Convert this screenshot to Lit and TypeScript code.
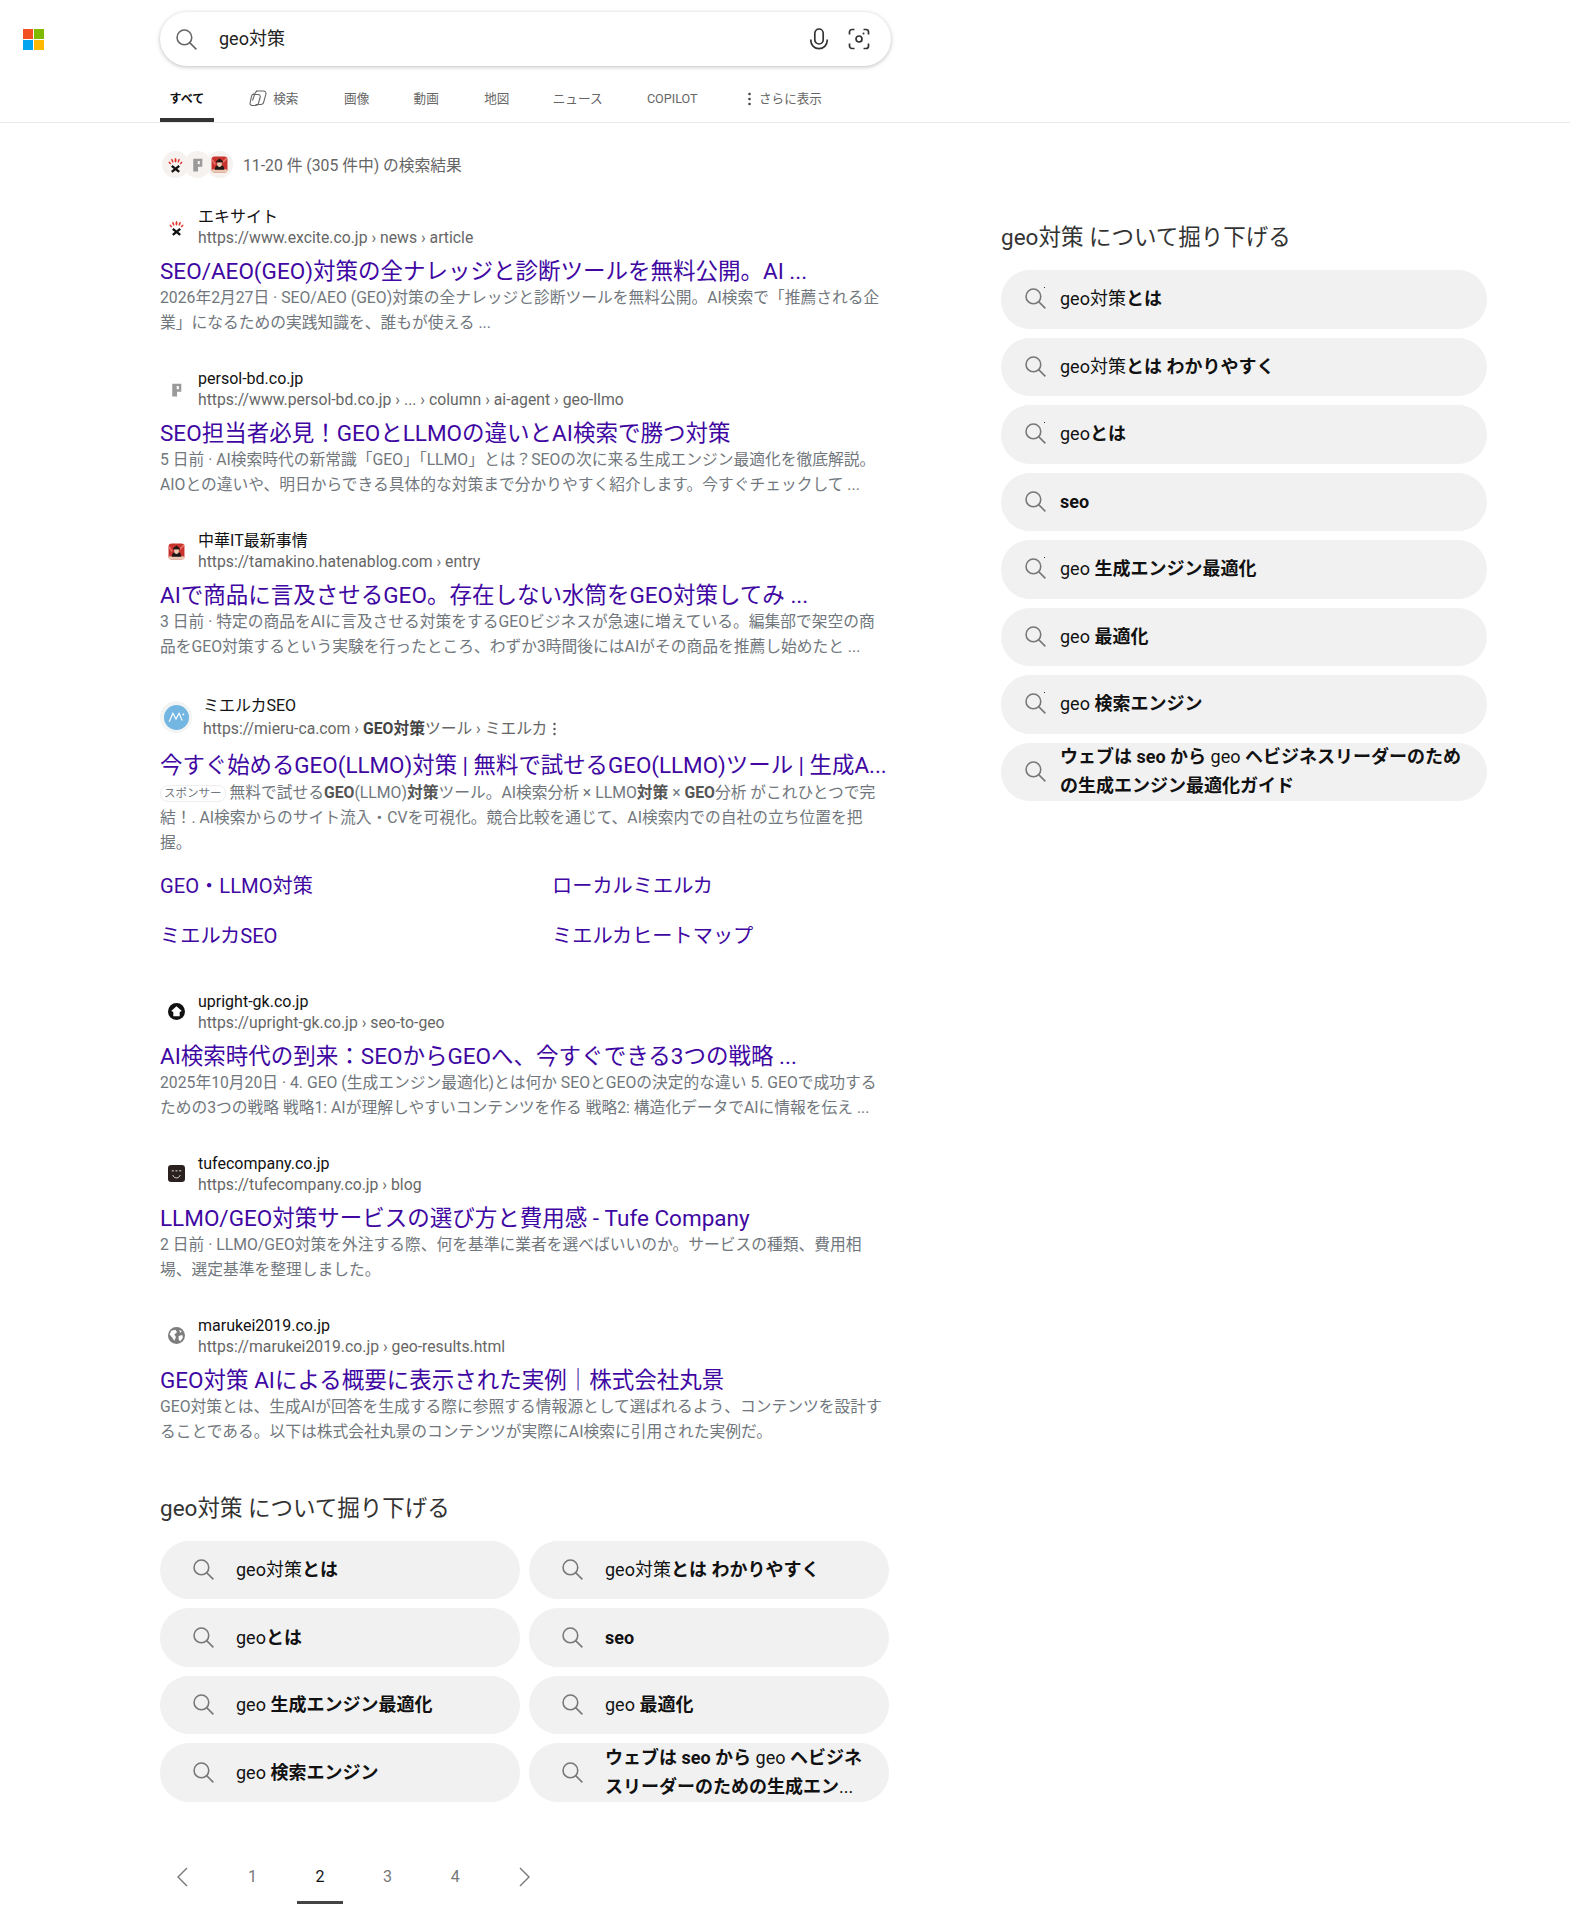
import { LitElement, html, css, svg } from "lit";
import { customElement } from "lit/decorators.js";

const searchIcon = (cls: string) => html`<svg class=${cls} viewBox="0 0 20 20" fill="none" stroke="currentColor" stroke-width="1.5"><circle cx="8" cy="8" r="7"/><path d="M13 13 19.400 19.400"/></svg>`;

const fav: Record<string, unknown> = {
  excite: svg`<g fill="#e0352c"><ellipse cx="8" cy="4" rx=".9" ry="2.200"/><ellipse cx="5" cy="4.500" rx=".8" ry="2" transform="rotate(-20 5 4.500)"/><ellipse cx="11" cy="4.500" rx=".8" ry="2" transform="rotate(20 11 4.500)"/><ellipse cx="2.700" cy="6.500" rx=".7" ry="1.600" transform="rotate(-45 2.700 6.500)"/><ellipse cx="13.300" cy="6.500" rx=".7" ry="1.600" transform="rotate(45 13.300 6.500)"/></g><path d="M4.500 9.300 11.500 15M11.500 9.300 4.500 15" stroke="#111" stroke-width="2.200"/>`,
  persol: svg`<path d="M4 2.500h8.500v7.500H8.500v4.500H4zM8.200 4.800v3h2V4.800z" fill="#9a9a9a" fill-rule="evenodd"/>`,
  hatena: svg`<rect x="0.500" y="0.500" width="15" height="15" rx="3" fill="#c9332e"/><rect x="0.500" y="12.500" width="15" height="3" rx="1.500" fill="#e8c9b4"/><path d="M1 3.500 4 8M15 2 11 6" stroke="#e9746a" stroke-width="1.400"/><path d="M3.500 13c.4-3.500 1.600-4.500 4.700-4.500s4 1.200 4.300 4.500z" fill="#201614"/><path d="M4.800 5 8 2.300 11.200 5v1.200H4.800z" fill="#201614"/><path d="M5.800 6h4.400v2c0 1.300-1 2.300-2.200 2.300S5.800 9.300 5.800 8z" fill="#e8cbb0"/>`,
  upright: svg`<circle cx="8" cy="8" r="8" fill="#111"/><path d="M8 3 13 7.500 11 8.500V12.500H5V8.500L3 7.500z" fill="#fff"/>`,
  tufe: svg`<rect width="16" height="16" rx="3" fill="#2a211f"/><path d="M4.500 9.500c1 3.500 6 3.500 7 0" stroke="#e8e4e0" fill="none" stroke-width=".9"/><path d="M3.500 5.500h2M7 5.500h2M10.500 5.500h2" stroke="#e8e4e0" stroke-width=".9"/>`,
  globe: svg`<circle cx="8" cy="8" r="8" fill="#7d7d7d"/><path d="M3 3.500 7 2.500 8.500 5 6 7 7.500 9.500 6 13 3.500 9.500 1.500 7zM10 8.500 13.500 7.500 14 10 11.500 13.500 10 12z M10.500 2.500l2.500 1.500-1.500 1.500z" fill="#fff"/>`,
};

const results = [
  { f: "excite", name: "エキサイト", url: html`https://www.excite.co.jp › news › article`,
    title: "SEO/AEO(GEO)対策の全ナレッジと診断ツールを無料公開。AI ...",
    lines: ["2026年2月27日 · SEO/AEO (GEO)対策の全ナレッジと診断ツールを無料公開。AI検索で「推薦される企", "業」になるための実践知識を、誰もが使える ..."] },
  { f: "persol", name: "persol-bd.co.jp", url: html`https://www.persol-bd.co.jp › ... › column › ai-agent › geo-llmo`,
    title: "SEO担当者必見！GEOとLLMOの違いとAI検索で勝つ対策",
    lines: ["5 日前 · AI検索時代の新常識「GEO」「LLMO」とは？SEOの次に来る生成エンジン最適化を徹底解説。", "AIOとの違いや、明日からできる具体的な対策まで分かりやすく紹介します。今すぐチェックして ..."] },
  { f: "hatena", name: "中華IT最新事情", url: html`https://tamakino.hatenablog.com › entry`,
    title: "AIで商品に言及させるGEO。存在しない水筒をGEO対策してみ ...",
    lines: ["3 日前 · 特定の商品をAIに言及させる対策をするGEOビジネスが急速に増えている。編集部で架空の商", "品をGEO対策するという実験を行ったところ、わずか3時間後にはAIがその商品を推薦し始めたと ..."] },
];
const results2 = [
  { f: "upright", name: "upright-gk.co.jp", url: html`https://upright-gk.co.jp › seo-to-geo`,
    title: "AI検索時代の到来：SEOからGEOへ、今すぐできる3つの戦略 ...",
    lines: ["2025年10月20日 · 4. GEO (生成エンジン最適化)とは何か SEOとGEOの決定的な違い 5. GEOで成功する", "ための3つの戦略 戦略1: AIが理解しやすいコンテンツを作る 戦略2: 構造化データでAIに情報を伝え ..."] },
  { f: "tufe", name: "tufecompany.co.jp", url: html`https://tufecompany.co.jp › blog`,
    title: "LLMO/GEO対策サービスの選び方と費用感 - Tufe Company",
    lines: ["2 日前 · LLMO/GEO対策を外注する際、何を基準に業者を選べばいいのか。サービスの種類、費用相", "場、選定基準を整理しました。"] },
  { f: "globe", name: "marukei2019.co.jp", url: html`https://marukei2019.co.jp › geo-results.html`,
    title: "GEO対策 AIによる概要に表示された実例｜株式会社丸景",
    lines: ["GEO対策とは、生成AIが回答を生成する際に参照する情報源として選ばれるよう、コンテンツを設計す", "ることである。以下は株式会社丸景のコンテンツが実際にAI検索に引用された実例だ。"] },
];

const pills = [
  html`geo対策<b>とは</b>`,
  html`geo対策<b>とは わかりやすく</b>`,
  html`geo<b>とは</b>`,
  html`<b>seo</b>`,
  html`geo <b>生成エンジン最適化</b>`,
  html`geo <b>最適化</b>`,
  html`geo <b>検索エンジン</b>`,
];

@customElement("app-root")
export class AppRoot extends LitElement {
  static styles = css`
    :host { display: block; width: 1570px; height: 1908px; overflow: hidden; background: #fff; color: #111;
      font-family: Roboto, "Noto Sans CJK JP", sans-serif; font-size: 15.750px; }
    b { font-weight: 700; }
    .header { height: 123px; box-sizing: border-box; border-bottom: 1px solid #e8e8e8; padding-left: 23px; }
    .top { display: flex; align-items: flex-start; }
    .logo { width: 21px; height: 20px; margin-top: 29px; display: grid; grid-template-columns: 10px 10px; grid-template-rows: 10px 10px; gap: 1px; flex: none; }
    .logo i:nth-child(1) { background: #f25022; }
    .logo i:nth-child(2) { background: #7fba00; }
    .logo i:nth-child(3) { background: #00a4ef; }
    .logo i:nth-child(4) { background: #ffb900; }
    .box { margin-left: 116px; margin-top: 12px; width: 731px; height: 54px; box-sizing: border-box; border-radius: 27px; background: #fff;
      box-shadow: 0 1px 4px rgba(0,0,0,.26); display: flex; align-items: center; padding: 0 21px 0 16px; }
    .box .si { width: 21px; height: 21px; color: #666; flex: none; }
    .q { margin-left: 22px; font-size: 18px; color: #222; flex: 1; padding-bottom: 5px; }
    .box svg.mic { width: 20px; height: 22px; color: #333; }
    .box svg.cam { width: 22px; height: 22px; color: #333; margin-left: 19px; }
    .tabs { display: flex; gap: 24.400px; margin-left: 137px; margin-top: 18px; height: 38px; box-sizing: border-box; font-size: 12.600px; color: #666; }
    .tab { padding: 7px 10px 0; height: 38px; box-sizing: border-box; white-space: nowrap; display: flex; align-items: flex-start; line-height: 16px; position: relative; }
    .tab.on { color: #111; font-weight: 700; font-size: 12px; padding: 7px 9.500px 0; border-bottom: 4px solid #333; margin-right: 1.200px; }
    .tab.ico { margin-right: 1.200px; }
    .tab.map { margin-left: 1px; }
    .tab.news { margin-left: -1px; }
    .tab.more { margin-left: 6px; }
    .tab svg { width: 18px; height: 18px; margin-right: 6px; margin-top: -2px; color: #666; }
    .tab .dots { width: 3px; height: 14px; margin: 1px 8px 0 0; color: #444; }
    .content { display: flex; align-items: flex-start; }
    .main { margin-left: 160px; width: 731px; flex: none; }
    .count { display: flex; align-items: center; margin-top: 27px; height: 28px; color: #666; }
    .stack { display: flex; margin-right: 10px; margin-left: 2px; }
    .stack span { width: 27px; height: 27px; border-radius: 50%; background: #f5f2ef; display: flex; align-items: center; justify-content: center; margin-right: -5px; flex: none; }
    .stack span:last-child { margin-right: 0; }
    .stack svg { width: 17px; height: 17px; flex: none; }
    .res { margin-bottom: 33px; }
    .res.first { margin-top: 28px; }
    .head { display: flex; align-items: center; height: 42px; }
    .fi { width: 32px; display: flex; justify-content: center; flex: none; margin-right: 6px; }
    .fi svg { width: 17px; height: 17px; }
    .name { line-height: 21px; color: #111; white-space: nowrap; font-size: 16px; }
    .url { line-height: 21px; color: #666; white-space: nowrap; }
    .url b { color: #444; }
    .title { display: block; margin-top: 8px; font-size: 22.500px; line-height: 30px; color: #4007a2; white-space: nowrap; }
    .snip { margin-top: -1px; line-height: 25px; color: #71777d; white-space: nowrap; }
    .snip b { color: #555; }
    .ad { margin-bottom: 40px; }
    .ad .fi { margin-right: 11px; }
    .ad .badge { width: 32px; height: 32px; border-radius: 50%; background: #f3f4f4; display: flex; align-items: center; justify-content: center; flex: none; }
    .ad .badge svg { width: 25px; height: 25px; }
    .ad .head { height: 50px; }
    .ad .name, .ad .url { line-height: 23px; }
    .ad .url { display: flex; align-items: center; }
    .ad .title { margin-top: 8px; white-space: nowrap; font-size: 22.400px; }
    .ad .snip { margin-top: 0; }
    .kebab { width: 3px; height: 14px; margin-left: 6px; color: #555; }
    .sp { display: inline-block; font-size: 11.500px; line-height: 15px; padding: 0 3px; border: 1px solid #eee; border-radius: 8px; margin-right: 4px; color: #71777d; vertical-align: 1px; }
    .links { display: grid; grid-template-columns: 392px 1fr; row-gap: 21px; margin-top: 16.500px; font-size: 20.200px; line-height: 29px; color: #4007a2; }
    h2 { font-size: 22.500px; font-weight: 400; color: #333; margin: 0; line-height: 30px; }
    .main h2 { margin-top: 49px; }
    .grid { display: grid; grid-template-columns: 360px 360px; gap: 9px; margin-top: 18px; }
    .pill { height: 58.500px; box-sizing: border-box; border-radius: 29px; background: #f1f1f1; display: flex; align-items: center; padding-left: 33px; font-size: 18px; line-height: 29px; color: #111; position: relative; }
    .pill .si { width: 21px; height: 21px; color: #777; flex: none; margin-right: 22px; }
    .pager { display: flex; margin-top: 48px; height: 54px; margin-left: -9px; color: #777; font-size: 16px; }
    .pg { width: 67.600px; display: flex; align-items: center; justify-content: center; height: 54px; box-sizing: border-box; }
    .pg.on { color: #111; position: relative; }
    .pg.on::after { content: ""; position: absolute; left: 11px; right: 11px; bottom: 0; height: 3px; background: #444; }
    .pg svg { width: 14px; height: 28px; color: #777; }
    .pg.prev { padding-right: 5px; }
    .pg.next { padding-left: 5px; }
    .side { margin-left: 110px; width: 486px; margin-top: 100px; flex: none; }
    .side h2 { margin-top: -1px; }
    .side .list { margin-top: 18px; display: flex; flex-direction: column; gap: 9px; }
    .side .pill { padding-left: 24px; padding-bottom: 1px; }
    .side .pill .si { margin-right: 14px; }
    .side .pill:nth-child(odd):not(:last-child)::after { content: ""; position: absolute; left: 43px; top: 17px; width: 1px; height: 1px; background: #333; }
  `;

  private res(r: any, cls = "") {
    return html`<div class="res ${cls}">
      <div class="head"><div class="fi"><svg viewBox="0 0 16 16">${fav[r.f]}</svg></div>
        <div><div class="name">${r.name}</div><div class="url">${r.url}</div></div></div>
      <a class="title">${r.title}</a>
      <div class="snip">${r.lines.map((l: string, i: number) => i ? html`<br />${l}` : l)}</div>
    </div>`;
  }

  private pill(c: unknown) {
    return html`<div class="pill">${searchIcon("si")}<div>${c}</div></div>`;
  }

  render() {
    return html`
      <div class="header">
        <div class="top">
          <div class="logo"><i></i><i></i><i></i><i></i></div>
          <div class="box">
            ${searchIcon("si")}
            <div class="q">geo対策</div>
            <svg class="mic" viewBox="0 0 20 22" fill="none" stroke="currentColor" stroke-width="1.700"><rect x="5.800" y="1" width="8.400" height="15" rx="4.200"/><path d="M1.800 11.500v1a8.200 8.200 0 0 0 16.400 0v-1" /></svg>
            <svg class="cam" viewBox="0 0 22 22" fill="none" stroke="currentColor" stroke-width="1.700"><path d="M6.500 1.500H4A2.500 2.500 0 0 0 1.500 4V6.500M15.500 1.500H18A2.500 2.500 0 0 1 20.500 4V6.500M6.500 20.500H4A2.500 2.500 0 0 1 1.500 18V15.500M15.500 20.500H18a2.500 2.500 0 0 0 2.500-2.500V15.500"/><circle cx="11" cy="11" r="3"/><circle cx="15.500" cy="5.500" r="1" fill="currentColor" stroke="none"/></svg>
          </div>
        </div>
        <div class="tabs">
          <div class="tab on">すべて</div>
          <div class="tab ico"><svg viewBox="0 0 18 18" fill="none" stroke="currentColor" stroke-width="1.100"><path d="M7 2h7.500a2.500 2.500 0 0 1 2.400 3.200l-2.200 8a3 3 0 0 1-2.900 2.300H6.500"/><path d="M8 2 6.300 3.500 3.500 11.500"/><path d="M4.500 5.500h4.700a2 2 0 0 1 2 2.500l-1.800 6.500a3 3 0 0 1-2.900 2H3a2 2 0 0 1-1.900-2.600l1.400-6.500a3 3 0 0 1 2-2.400z"/></svg>検索</div>
          <div class="tab">画像</div>
          <div class="tab">動画</div>
          <div class="tab map">地図</div>
          <div class="tab news">ニュース</div>
          <div class="tab">COPILOT</div>
          <div class="tab more"><svg class="dots" viewBox="0 0 3 14" fill="currentColor"><circle cx="1.500" cy="2" r="1.300"/><circle cx="1.500" cy="7" r="1.300"/><circle cx="1.500" cy="12" r="1.300"/></svg>さらに表示</div>
        </div>
      </div>
      <div class="content">
        <div class="main">
          <div class="count">
            <div class="stack">
              <span><svg viewBox="0 0 16 16">${fav.excite}</svg></span>
              <span><svg viewBox="0 0 16 16">${fav.persol}</svg></span>
              <span><svg viewBox="0 0 16 16">${fav.hatena}</svg></span>
            </div>
            11-20 件 (305 件中) の検索結果
          </div>
          ${results.map((r, i) => this.res(r, i === 0 ? "first" : ""))}
          <div class="res ad">
            <div class="head"><div class="fi"><div class="badge"><svg viewBox="0 0 24 24"><circle cx="12" cy="12" r="12" fill="#74b6e2"/><path d="M5 16 8.500 8l3 5.500L14.500 8l3 7" fill="none" stroke="#fff" stroke-width="1.100"/><circle cx="18.500" cy="9" r=".9" fill="#fff"/></svg></div></div>
              <div><div class="name">ミエルカSEO</div><div class="url"><span>https://mieru-ca.com › <b>GEO対策</b>ツール › ミエルカ</span><svg class="kebab" viewBox="0 0 3 14" fill="currentColor"><circle cx="1.500" cy="2" r="1.200"/><circle cx="1.500" cy="7" r="1.200"/><circle cx="1.500" cy="12" r="1.200"/></svg></div></div></div>
            <a class="title">今すぐ始めるGEO(LLMO)対策 | 無料で試せるGEO(LLMO)ツール | 生成A...</a>
            <div class="snip"><span class="sp">スポンサー</span>無料で試せる<b>GEO</b>(LLMO)<b>対策</b>ツール。AI検索分析 × LLMO<b>対策</b> × <b>GEO</b>分析 がこれひとつで完<br />結！. AI検索からのサイト流入・CVを可視化。競合比較を通じて、AI検索内での自社の立ち位置を把<br />握。</div>
            <div class="links"><a>GEO・LLMO対策</a><a>ローカルミエルカ</a><a>ミエルカSEO</a><a>ミエルカヒートマップ</a></div>
          </div>
          ${results2.map((r) => this.res(r))}
          <h2>geo対策 について掘り下げる</h2>
          <div class="grid">
            ${pills.map((p) => this.pill(p))}
            ${this.pill(html`<b>ウェブは seo から </b>geo<b> ヘビジネ<br />スリーダーのための生成エン</b>...`)}
          </div>
          <div class="pager">
            <div class="pg prev"><svg viewBox="0 0 14 28" fill="none" stroke="currentColor" stroke-width="1.400"><path d="M12 5 3 14l9 9"/></svg></div>
            <div class="pg">1</div><div class="pg on">2</div><div class="pg">3</div><div class="pg">4</div>
            <div class="pg next"><svg viewBox="0 0 14 28" fill="none" stroke="currentColor" stroke-width="1.400"><path d="M2 5l9 9-9 9"/></svg></div>
          </div>
        </div>
        <div class="side">
          <h2>geo対策 について掘り下げる</h2>
          <div class="list">
            ${pills.map((p) => this.pill(p))}
            ${this.pill(html`<b>ウェブは seo から </b>geo<b> ヘビジネスリーダーのため<br />の生成エンジン最適化ガイド</b>`)}
          </div>
        </div>
      </div>
    `;
  }
}
